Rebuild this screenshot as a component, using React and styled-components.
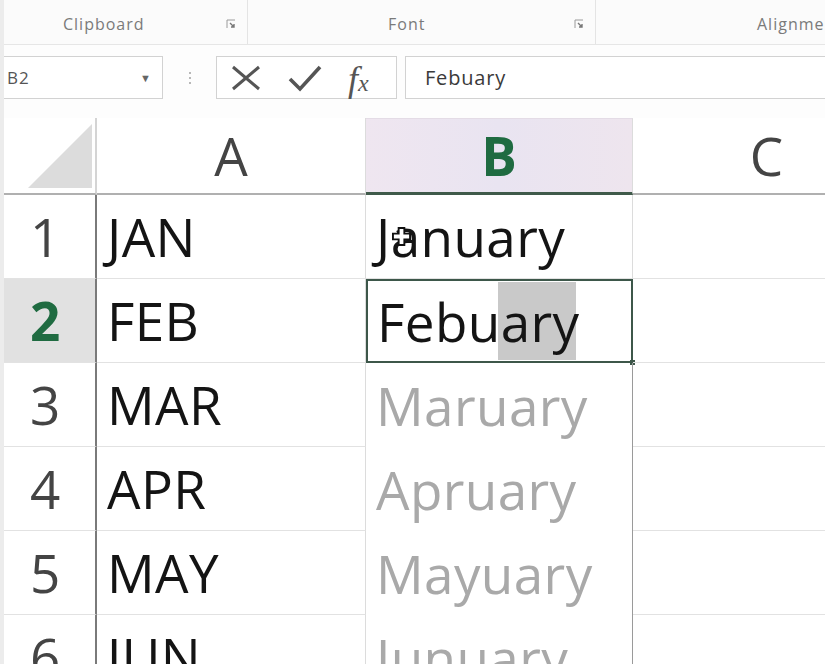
import React from "react";
import styled, { createGlobalStyle } from "styled-components";

const GlobalStyle = createGlobalStyle`
  html, body {
    margin: 0;
    padding: 0;
    width: 825px;
    height: 664px;
    overflow: hidden;
    background: #ffffff;
    font-family: "Open Sans", "Liberation Sans", sans-serif;
  }
`;

const Page = styled.div`
  width: 825px;
  height: 664px;
  overflow: hidden;
  display: flex;
  flex-direction: column;
  border-left: 4px solid #ececec;
  box-sizing: border-box;
`;

const Ribbon = styled.div`
  display: flex;
  height: 44px;
  background: #fbfbfb;
  border-bottom: 1px solid #e6e6e6;
  flex-shrink: 0;
`;

const Group = styled.div`
  display: flex;
  align-items: center;
  width: ${(p) => p.$width}px;
  flex-shrink: 0;
  border-right: ${(p) => (p.$last ? "none" : "1px solid #e4e4e4")};
  padding-top: 4px;
  box-sizing: border-box;
`;

const GroupLabel = styled.span`
  flex: 1;
  padding-left: ${(p) => p.$indent || 0}px;
  font-size: 16px;
  letter-spacing: 1px;
  color: #7a7a7a;
  white-space: nowrap;
`;

const Launcher = styled.svg`
  width: 10px;
  height: 10px;
  margin-right: 11px;
`;

const FormulaBar = styled.div`
  display: flex;
  align-items: center;
  height: 73px;
  padding-bottom: 8px;
  box-sizing: border-box;
  background: #fdfdfd;
  flex-shrink: 0;
`;

const NameBox = styled.div`
  display: flex;
  align-items: center;
  justify-content: space-between;
  width: 159px;
  height: 43px;
  box-sizing: border-box;
  border: 1px solid #d2d2d2;
  border-left: none;
  background: #fff;
  padding: 0 10px 0 3px;
  font-size: 17px;
  letter-spacing: 1px;
  color: #555;
`;

const Arrow = styled.span`
  font-size: 11px;
  color: #666;
`;

const Dots = styled.div`
  width: 53px;
  display: flex;
  flex-direction: column;
  align-items: center;
  gap: 3px;
  & > i {
    width: 2px;
    height: 2px;
    background: #b8b8b8;
  }
`;

const IconBox = styled.div`
  display: flex;
  align-items: center;
  width: 181px;
  height: 43px;
  box-sizing: border-box;
  border: 1px solid #d2d2d2;
  background: #fff;
  padding-left: 13px;
  gap: 26px;
`;

const Fx = styled.span`
  font-family: "Liberation Serif", serif;
  font-style: italic;
  font-size: 36px;
  color: #555;
  line-height: 1;
  margin-top: 2px;
  & > sub {
    font-size: 24px;
    vertical-align: 0;
  }
`;

const FormulaInput = styled.div`
  flex: 1;
  height: 43px;
  margin-left: 8px;
  box-sizing: border-box;
  border: 1px solid #d2d2d2;
  border-right: none;
  background: #fff;
  display: flex;
  align-items: center;
  padding-left: 19px;
  font-size: 20px;
  letter-spacing: 0.8px;
  color: #3a3a3a;
`;

const Sheet = styled.div`
  display: grid;
  grid-template-columns: 93px 269px 267px 268px;
  grid-template-rows: 77px;
  grid-auto-rows: 84px;
  font-size: 53px;
  line-height: 1;
  color: #141414;
`;

const Corner = styled.div`
  display: flex;
  align-items: flex-end;
  justify-content: flex-end;
  padding: 0 3px 5px 0;
  border-bottom: 2px solid #b0b0b0;
  border-right: 2px solid #d4d4d4;
  box-sizing: border-box;
`;

const ColHeader = styled.div`
  display: flex;
  align-items: center;
  justify-content: center;
  box-sizing: border-box;
  color: ${(p) => (p.$selected ? "#1f6b41" : "#444")};
  font-weight: ${(p) => (p.$selected ? 700 : 400)};
  background: ${(p) =>
    p.$selected ? "linear-gradient(90deg, #efe6f0, #e9e4f1 50%, #eee5ee)" : "#fff"};
  border-bottom: ${(p) => (p.$selected ? "3px solid #3f5a4a" : "2px solid #b0b0b0")};
  border-right: 1px solid #dcdcdc;
  border-top: ${(p) => (p.$selected ? "1px solid #e4dce6" : "none")};
`;

const RowHeader = styled.div`
  display: flex;
  align-items: center;
  padding-left: 26px;
  box-sizing: border-box;
  color: ${(p) => (p.$selected ? "#1f6b41" : "#444")};
  font-weight: ${(p) => (p.$selected ? 700 : 400)};
  background: ${(p) => (p.$selected ? "#e1e1e1" : "#fff")};
  border-right: 2px solid #7a7a7a;
  border-bottom: 1px solid #e2e2e2;
`;

const Cell = styled.div`
  position: relative;
  display: flex;
  align-items: center;
  padding-left: 10px;
  box-sizing: border-box;
  letter-spacing: 0.4px;
  color: ${(p) => (p.$ghost ? "#a9a9a9" : "#141414")};
  border-bottom: ${(p) => (p.$ghost ? "none" : "1px solid #e2e2e2")};
  border-right: 1px solid ${(p) => (p.$dark ? "#9a9a9a" : "#dcdcdc")};
  ${(p) =>
    p.$active &&
    `
    border: 2px solid #3d574a;
    padding-left: 9px;
  `}
`;

const Completion = styled.span`
  position: absolute;
  top: 1px;
  bottom: 1px;
  left: 130px;
  width: 78px;
  background: #c9c9c9;
`;

const CellText = styled.span`
  position: relative;
`;

const FillHandle = styled.span`
  position: absolute;
  right: -4px;
  bottom: -4px;
  width: 5px;
  height: 5px;
  background: #3d574a;
`;

const Cursor = styled.svg`
  position: absolute;
  left: 26px;
  top: 32px;
  width: 19px;
  height: 19px;
`;

const rows = [
  { n: 1, a: "JAN", b: "January" },
  { n: 2, a: "FEB", b: "Febuary", active: true },
  { n: 3, a: "MAR", b: "Maruary", ghost: true },
  { n: 4, a: "APR", b: "Apruary", ghost: true },
  { n: 5, a: "MAY", b: "Mayuary", ghost: true },
  { n: 6, a: "JUN", b: "Junuary", ghost: true },
];

function LauncherIcon() {
  return (
    <Launcher viewBox="0 0 10 10">
      <path d="M1 9V1h8" fill="none" stroke="#9a9a9a" strokeWidth="1" />
      <path d="M4 4l4 4M8 5v3H5" fill="none" stroke="#777" strokeWidth="1.4" />
    </Launcher>
  );
}

export default function App() {
  return (
    <>
      <GlobalStyle />
      <Page>
        <Ribbon>
          <Group $width={244}>
            <GroupLabel $indent={59}>Clipboard</GroupLabel>
            <LauncherIcon />
          </Group>
          <Group $width={348}>
            <GroupLabel $indent={140}>Font</GroupLabel>
            <LauncherIcon />
          </Group>
          <Group $width={240} $last>
            <GroupLabel $indent={161}>Alignment</GroupLabel>
          </Group>
        </Ribbon>

        <FormulaBar>
          <NameBox>
            <span>B2</span>
            <Arrow>▼</Arrow>
          </NameBox>
          <Dots>
            <i />
            <i />
            <i />
          </Dots>
          <IconBox>
            <svg width="32" height="28" viewBox="0 0 32 28">
              <path d="M3 3l26 22M29 3L3 25" stroke="#555" strokeWidth="3" fill="none" />
            </svg>
            <svg width="34" height="28" viewBox="0 0 34 28">
              <path d="M2 15l10 10L32 3" stroke="#555" strokeWidth="3.6" fill="none" />
            </svg>
            <Fx>
              f<sub>x</sub>
            </Fx>
          </IconBox>
          <FormulaInput>Febuary</FormulaInput>
        </FormulaBar>

        <Sheet>
          <Corner>
            <svg width="64" height="64" viewBox="0 0 64 64">
              <path d="M0 64L64 0v64z" fill="#dcdcdc" />
            </svg>
          </Corner>
          <ColHeader>A</ColHeader>
          <ColHeader $selected>B</ColHeader>
          <ColHeader>C</ColHeader>

          {rows.map((r) => (
            <React.Fragment key={r.n}>
              <RowHeader $selected={r.active}>{r.n}</RowHeader>
              <Cell>{r.a}</Cell>
              <Cell $ghost={r.ghost} $dark={r.ghost} $active={r.active}>
                {r.active && <Completion />}
                <CellText>{r.b}</CellText>
                {r.n === 1 && (
                  <Cursor viewBox="0 0 20 20">
                    <path
                      d="M7 1h6v6h6v6h-6v6H7v-6H1V7h6z"
                      fill="#fff"
                      stroke="#111"
                      strokeWidth="2"
                    />
                  </Cursor>
                )}
                {r.active && <FillHandle />}
              </Cell>
              <Cell />
            </React.Fragment>
          ))}
        </Sheet>
      </Page>
    </>
  );
}
